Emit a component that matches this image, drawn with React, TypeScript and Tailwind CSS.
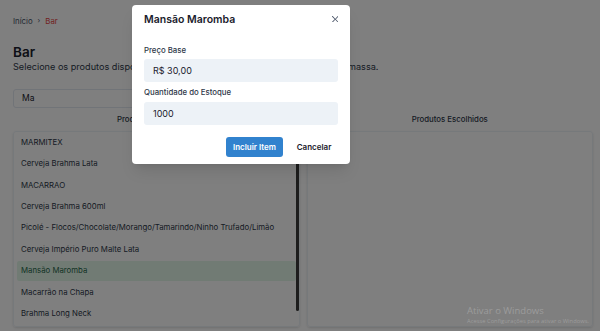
import React from 'react';

const products = [
  'MARMITEX',
  'Cerveja Brahma Lata',
  'MACARRAO',
  'Cerveja Brahma 600ml',
  'Picolé - Flocos/Chocolate/Morango/Tamarindo/Ninho Trufado/Limão',
  'Cerveja Império Puro Malte Lata',
  'Mansão Maromba',
  'Macarrão na Chapa',
  'Brahma Long Neck',
];

const selected = 'Mansão Maromba';

const CloseIcon = () => (
  <svg viewBox="0 0 24 24" className="h-[6.5px] w-[6.5px]" fill="currentColor">
    <path d="M.439,21.44a1.5,1.5,0,0,0,2.122,2.121L11.823,14.3a.25.25,0,0,1,.354,0l9.262,9.263a1.5,1.5,0,1,0,2.122-2.121L14.3,12.177a.25.25,0,0,1,0-.354l9.263-9.262A1.5,1.5,0,0,0,21.439.44L12.177,9.7a.25.25,0,0,1-.354,0L2.561.44A1.5,1.5,0,0,0,.439,2.561L9.7,11.823a.25.25,0,0,1,0,.354Z" />
  </svg>
);

export default function App() {
  return (
    <div className="relative h-screen w-full overflow-hidden bg-white font-['Inter',sans-serif] text-[#1a202c]">
      {/* Page */}
      <div className="flex flex-col pl-[13px] pr-[7px] pt-[15px]">
        <nav className="flex h-[12px] items-center gap-[5px] text-[7.8px] leading-[12px] text-[#4a5568]">
          <span>Início</span>
          <span className="text-[7px]">›</span>
          <span className="text-[#e53e3e]">Bar</span>
        </nav>

        <h1 className="mt-[17px] text-[13.5px] font-semibold leading-[16px]">Bar</h1>
        <p className="mt-[1px] text-[9.15px] leading-[12px] text-[#2d3748]">
          Selecione os produtos disponíveis para este local. Você pode incluir itens em massa.
        </p>

        <div className="mt-[16px] flex h-[19px] w-[310px] items-center rounded-[3px] border border-[#e2e8f0] px-[8px] text-[8.5px]">
          Ma
        </div>

        <div className="mt-[6px] grid grid-cols-2 gap-[7px]">
          <div className="flex flex-col">
            <h2 className="text-center text-[7.8px] font-medium leading-[11px] text-[#2d3748]">
              Produtos Disponíveis
            </h2>
            <div className="relative mt-[5.5px] h-[196px] overflow-hidden rounded-[3px] border border-[#edf2f7] shadow-sm">
              <ul className="flex flex-col gap-[2px] px-[3px] pt-[1.5px]">
                {products.map((p) => (
                  <li
                    key={p}
                    className={`flex h-[19.4px] shrink-0 items-center whitespace-nowrap rounded-[2px] px-[4px] text-[7.8px] ${
                      p === selected ? 'bg-[#e3f7e9] text-[#276749]' : 'text-[#2d3748]'
                    }`}
                  >
                    {p}
                  </li>
                ))}
              </ul>
              {/* scrollbar thumb */}
              <div className="absolute right-[0px] top-[2px] h-[177px] w-[3px] rounded-full bg-[#3a3a3a]" />
            </div>
          </div>

          <div className="flex flex-col">
            <h2 className="text-center text-[7.8px] font-medium leading-[11px] text-[#2d3748]">
              Produtos Escolhidos
            </h2>
            <div className="mt-[5.5px] h-[196px] rounded-[3px] border border-[#edf2f7] shadow-sm" />
          </div>
        </div>
      </div>

      {/* Overlay */}
      <div className="absolute inset-0 bg-black/50" />

      {/* Modal */}
      <div className="absolute left-[132px] top-[5px] w-[218px] rounded-[4px] bg-white px-[12px] pb-[7px] pt-[8px] shadow-lg">
        <div className="text-[10.5px] font-semibold leading-[14px] text-[#1a202c]">Mansão Maromba</div>
        <button className="absolute right-[10px] top-[9px] flex h-[10px] w-[10px] items-center justify-center text-[#4a5568]">
          <CloseIcon />
        </button>

        <label className="mt-[17.5px] block text-[7.8px] font-medium leading-[11px] text-[#2d3748]">Preço Base</label>
        <div className="mt-[3.5px] flex h-[23px] items-center rounded-[3px] bg-[#edf2f7] px-[9px] text-[9px] text-[#1a202c]">
          R$ 30,00
        </div>

        <label className="mt-[4.5px] block text-[7.8px] font-medium leading-[11px] text-[#2d3748]">
          Quantidade do Estoque
        </label>
        <div className="mt-[4.5px] flex h-[23px] items-center rounded-[3px] bg-[#edf2f7] px-[9px] text-[9px] text-[#1a202c]">
          1000
        </div>

        <div className="mt-[12px] flex justify-end gap-[7px]">
          <button className="flex h-[20px] w-[57px] items-center justify-center rounded-[3px] bg-[#3182ce] text-[8px] font-semibold text-white">
            Incluir Item
          </button>
          <button className="flex h-[20px] w-[48px] items-center justify-center rounded-[3px] text-[8px] font-semibold text-[#1a202c]">
            Cancelar
          </button>
        </div>
      </div>

      {/* Windows activation watermark */}
      <div className="absolute left-[467px] top-[305px] font-['Open_Sans',sans-serif] text-[#9c9c9c]">
        <div className="text-[9.5px] leading-[12px]">Ativar o Windows</div>
        <div className="text-[5.8px] leading-[8px]">Acesse Configurações para ativar o Windows.</div>
      </div>
    </div>
  );
}
